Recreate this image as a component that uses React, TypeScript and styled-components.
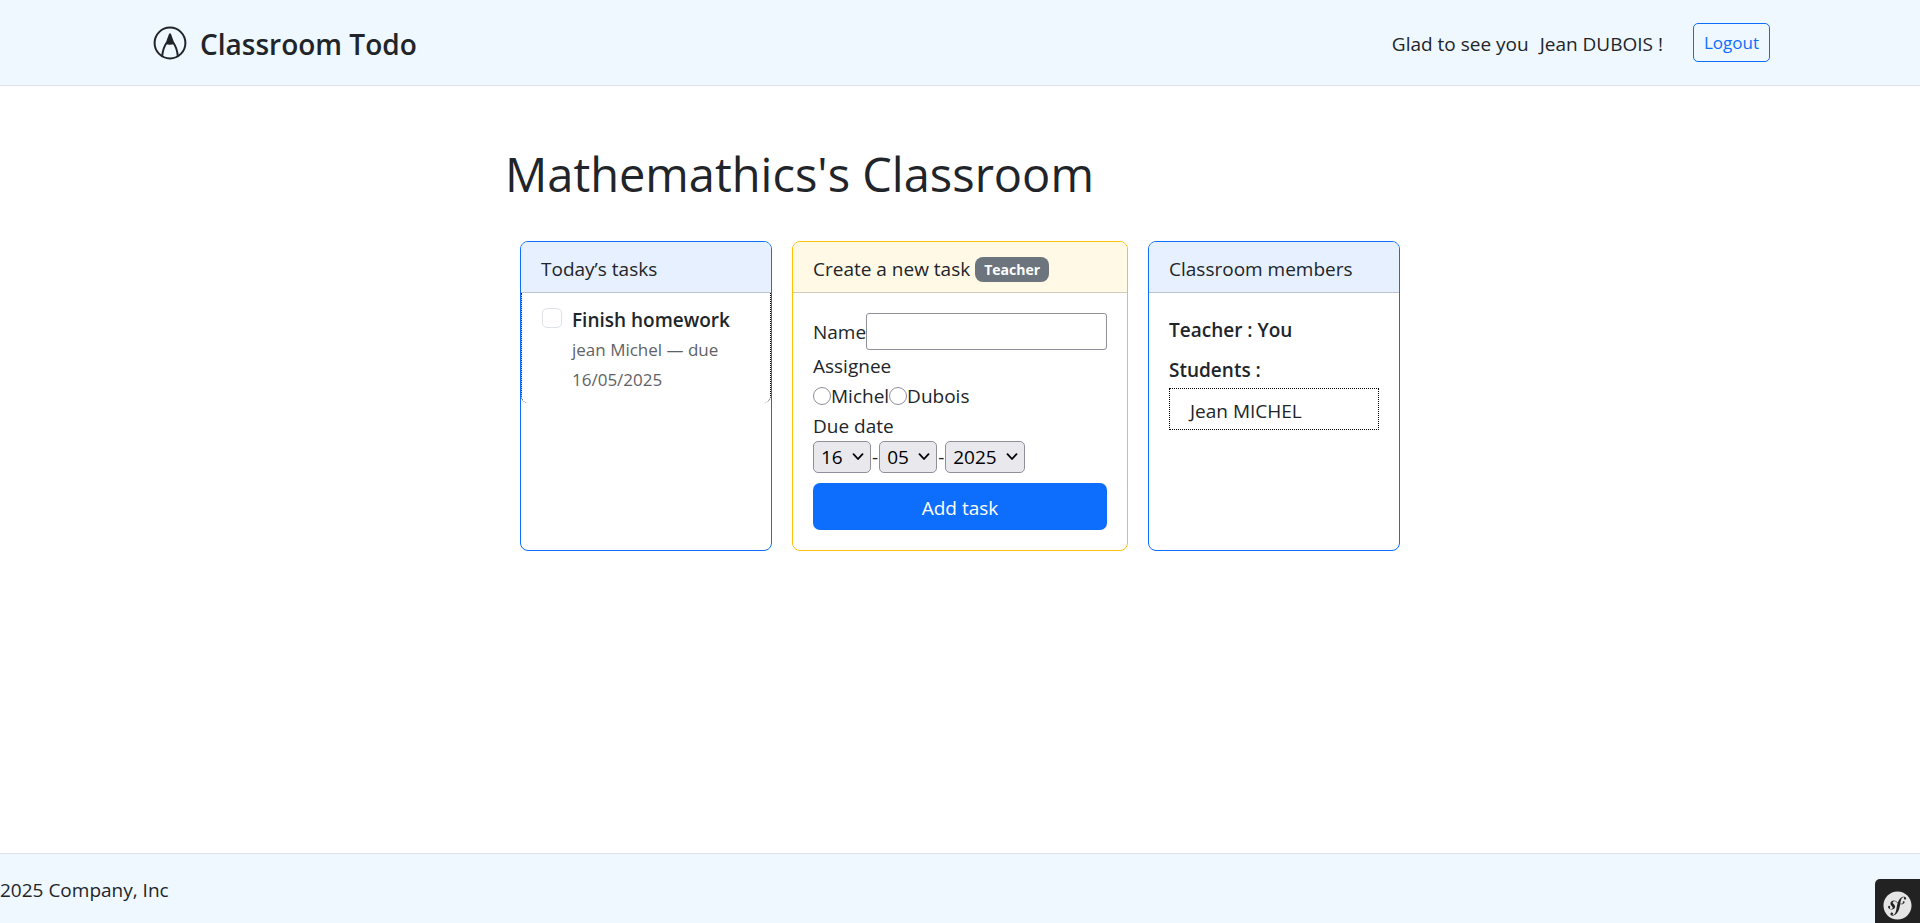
import type { ReactNode } from "react";
import styled, { createGlobalStyle } from "styled-components";
import { FaSymfony } from "react-icons/fa";

const GlobalStyle = createGlobalStyle`
  *, *::before, *::after { box-sizing: border-box; }
  body {
    margin: 0;
    background: #fff;
    color: #212529;
    font-family: "Open Sans", "Noto Sans", sans-serif;
    font-size: 19px;
    line-height: 30px;
  }
  button, input, select { font: inherit; margin: 0; }
`;

const Page = styled.div`
  display: flex;
  flex-direction: column;
  min-height: 100vh;
`;

const Header = styled.header`
  background: #eff7ff;
  border-bottom: 1px solid #dee2e6;
`;

const HeaderInner = styled.div`
  display: flex;
  align-items: center;
  justify-content: space-between;
  max-width: 1650px;
  height: 85px;
  margin: 0 auto;
  padding: 0 15px;
`;

const Brand = styled.a`
  display: flex;
  align-items: center;
  gap: 10px;
  color: inherit;
  font-size: 28px;
  font-weight: 600;
  text-decoration: none;
`;

const BrandName = styled.span`
  padding-top: 2px;
`;

const Account = styled.div`
  display: flex;
  align-items: center;
  gap: 30px;
`;

const Greeting = styled.span`
  display: flex;
  gap: 11px;
  padding-top: 2px;
`;

const LogoutButton = styled.button`
  height: 39px;
  padding: 1px 10px 0;
  border: 1px solid #0d6efd;
  border-radius: 5px;
  background: transparent;
  color: #0d6efd;
  font-size: 17px;
  line-height: 26px;
`;

const Main = styled.main`
  flex: 1;
  width: 100%;
  max-width: 920px;
  margin: 0 auto;
  padding-top: 58px;
`;

const Title = styled.h1`
  margin: 0 5px;
  font-size: 47px;
  font-weight: 400;
  line-height: 60px;
`;

const Cards = styled.div`
  display: grid;
  grid-template-columns: 3fr 4fr 3fr;
  gap: 20px;
  padding: 37px 20px;
`;

type Tone = "primary" | "warning";
const tones = {
  primary: { line: "#0d6efd", fill: "#e7f0ff" },
  warning: { line: "#ffc107", fill: "#fff9e6" },
};

const CardBox = styled.section<{ $tone: Tone }>`
  min-width: 0;
  border: 1px solid ${(p) => tones[p.$tone].line};
  border-radius: 8px;
  background: #fff;
`;

const CardHeader = styled.h2<{ $tone: Tone }>`
  display: flex;
  align-items: center;
  gap: 5px;
  height: 51px;
  margin: 0;
  padding: 4px 20px 0;
  border-bottom: 1px solid rgba(0, 0, 0, 0.18);
  border-radius: 7px 7px 0 0;
  background: ${(p) => tones[p.$tone].fill};
  font-size: 19px;
  font-weight: 400;
`;

const Badge = styled.span`
  padding: 0 9px;
  border-radius: 8px;
  background: #6c757d;
  color: #fff;
  font-size: 14px;
  font-weight: 700;
  line-height: 25px;
`;

const TaskList = styled.ul`
  margin: 0;
  padding: 0;
  list-style: none;
`;

const TaskItem = styled.li`
  display: flex;
  align-items: flex-start;
  gap: 10px;
  padding: 12px 20px 8px;
  border: dotted #000;
  border-width: 0 1px;
  border-radius: 0 0 7px 7px;
`;

const TaskCheck = styled.input`
  flex: none;
  appearance: none;
  width: 20px;
  height: 20px;
  margin-top: 3px;
  border: 1px solid #dee2e6;
  border-radius: 5px;
  background: #fff;
`;

const TaskLabel = styled.label`
  display: block;
`;

const Strong = styled.strong`
  display: block;
  font-weight: 600;
`;

const TaskMeta = styled.span`
  display: block;
  color: #5f6265;
  font-size: 17px;
`;

const Form = styled.form`
  display: flex;
  flex-direction: column;
  padding: 20px;
`;

const NameRow = styled.div`
  display: flex;
  align-items: center;
  height: 38px;
`;

const TextInput = styled.input`
  flex: 1;
  align-self: flex-start;
  min-width: 0;
  height: 37px;
  border: 1px solid #8f8f9d;
  border-radius: 3px;
  background: #fff;
`;

const Group = styled.fieldset`
  min-width: 0;
  margin: 0;
  padding: 0;
  border: 0;
`;

const Legend = styled.legend`
  padding: 0;
`;

const Inline = styled.div`
  display: flex;
  align-items: center;
`;

const Radio = styled.input`
  appearance: none;
  width: 18px;
  height: 18px;
  border: 1px solid #8f8f9d;
  border-radius: 50%;
  background: #fff;
`;

const DateRow = styled(Inline)`
  gap: 1px;
`;

const SelectWrap = styled.span`
  display: grid;
  position: relative;
`;

const Select = styled.select`
  appearance: none;
  height: 32px;
  padding: 0 27px 0 7px;
  border: 1px solid #8f8f9d;
  border-radius: 5px;
  background: #e9e9ed;
  color: #000;
`;

const Chevron = styled.svg`
  position: absolute;
  top: 12px;
  right: 7px;
  pointer-events: none;
`;

const SubmitButton = styled.button`
  height: 47px;
  margin-top: 10px;
  padding: 2px 10px 0;
  border: 0;
  border-radius: 7px;
  background: #0d6efd;
  color: #fff;
`;

const Members = styled.div`
  padding: 22px 20px;
`;

const MemberLine = styled.p`
  margin: 0 0 10px;
  font-weight: 600;

  &:last-of-type { margin-bottom: 3px; }
`;

const StudentList = styled.ul`
  margin: 0;
  padding: 0;
  list-style: none;
`;

const Student = styled.li`
  padding: 7px 20px 3px;
  border: 1px dotted #000;
`;

const Footer = styled.footer`
  padding: 21px 0 18px;
  border-top: 1px solid #dee2e6;
  background: #eff7ff;
`;

const FooterText = styled.p`
  margin: 0;
`;

const DebugButton = styled.button`
  position: fixed;
  right: 0;
  bottom: 0;
  display: flex;
  align-items: center;
  justify-content: center;
  width: 45px;
  height: 44px;
  padding: 8px 0 0;
  border: 0;
  border-radius: 5px 0 0 0;
  background: #222;
  color: #e5e5e5;
`;

function Logo() {
  return (
    <svg width="40" height="34" viewBox="0 0 40 34" aria-hidden="true">
      <circle cx="20" cy="17" r="15.4" fill="none" stroke="currentColor" strokeWidth="2" />
      <path d="M19.2 7.4 H20.8 L24.6 17.8 Q20 19.6 15.4 17.8 Z" fill="currentColor" />
      <path d="M16.5 17 Q13 22 12.2 29.8 M23.5 17 Q27 22 27.8 29.8" fill="none" stroke="currentColor" strokeWidth="2" />
    </svg>
  );
}

function Card({ tone, title, badge, children }: { tone: Tone; title: string; badge?: string; children: ReactNode }) {
  return (
    <CardBox $tone={tone}>
      <CardHeader $tone={tone}>
        {title}
        {badge && <Badge>{badge}</Badge>}
      </CardHeader>
      {children}
    </CardBox>
  );
}

function DateSelect({ label, value }: { label: string; value: string }) {
  return (
    <SelectWrap>
      <Select aria-label={label} defaultValue={value}>
        <option>{value}</option>
      </Select>
      <Chevron width="12" height="8" viewBox="0 0 12 8" aria-hidden="true">
        <path d="M1.5 1.2 L6 6 L10.5 1.2" fill="none" stroke="#000" strokeWidth="1.8" strokeLinecap="round" strokeLinejoin="round" />
      </Chevron>
    </SelectWrap>
  );
}

export default function App() {
  return (
    <Page>
      <GlobalStyle />
      <Header>
        <HeaderInner>
          <Brand href="#">
            <Logo />
            <BrandName>Classroom Todo</BrandName>
          </Brand>
          <Account>
            <Greeting>
              <span>Glad to see you</span>
              <span>Jean DUBOIS !</span>
            </Greeting>
            <LogoutButton type="button">Logout</LogoutButton>
          </Account>
        </HeaderInner>
      </Header>

      <Main>
        <Title>Mathemathics's Classroom</Title>
        <Cards>
          <Card tone="primary" title="Today’s tasks">
            <TaskList>
              <TaskItem>
                <TaskCheck type="checkbox" id="task-1" />
                <TaskLabel htmlFor="task-1">
                  <Strong>Finish homework</Strong>
                  <TaskMeta>jean Michel — due 16/05/2025</TaskMeta>
                </TaskLabel>
              </TaskItem>
            </TaskList>
          </Card>

          <Card tone="warning" title="Create a new task" badge="Teacher">
            <Form onSubmit={(e) => e.preventDefault()}>
              <NameRow>
                <label htmlFor="task-name">Name</label>
                <TextInput id="task-name" type="text" />
              </NameRow>
              <Group>
                <Legend>Assignee</Legend>
                <Inline>
                  <Radio type="radio" name="assignee" id="assignee-michel" />
                  <label htmlFor="assignee-michel">Michel</label>
                  <Radio type="radio" name="assignee" id="assignee-dubois" />
                  <label htmlFor="assignee-dubois">Dubois</label>
                </Inline>
              </Group>
              <Group>
                <Legend>Due date</Legend>
                <DateRow>
                  <DateSelect label="Day" value="16" />
                  -
                  <DateSelect label="Month" value="05" />
                  -
                  <DateSelect label="Year" value="2025" />
                </DateRow>
              </Group>
              <SubmitButton type="submit">Add task</SubmitButton>
            </Form>
          </Card>

          <Card tone="primary" title="Classroom members">
            <Members>
              <MemberLine>Teacher : You</MemberLine>
              <MemberLine>Students :</MemberLine>
              <StudentList>
                <Student>Jean MICHEL</Student>
              </StudentList>
            </Members>
          </Card>
        </Cards>
      </Main>

      <Footer>
        <FooterText>2025 Company, Inc</FooterText>
      </Footer>
      <DebugButton type="button" aria-label="Symfony toolbar">
        <FaSymfony size={29} />
      </DebugButton>
    </Page>
  );
}
